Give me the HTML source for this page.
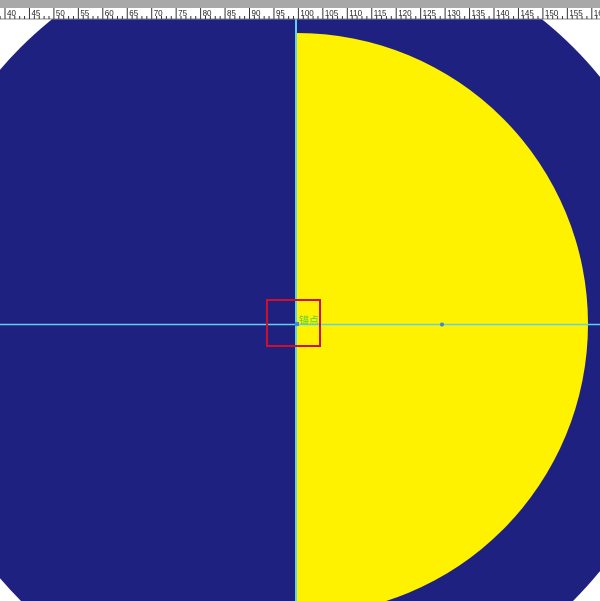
<!DOCTYPE html>
<html><head><meta charset="utf-8"><style>
html,body{margin:0;padding:0;width:600px;height:601px;overflow:hidden;background:#fff;font-family:"Liberation Sans","Noto Sans CJK SC",sans-serif}
</style></head><body>
<svg width="600" height="601" style="position:absolute;left:0;top:0">
<circle cx="297" cy="324" r="391" fill="#1e2180"/>
<path d="M297 33 A291 291 0 0 1 297 615 Z" fill="#fff200"/>
<line x1="296" y1="19" x2="296" y2="601" stroke="#5fd0f0" stroke-width="2"/>
<line x1="0" y1="324.5" x2="600" y2="324.5" stroke="#5fd0f0" stroke-width="1.5"/>
<rect x="267" y="300" width="53" height="46" fill="none" stroke="#d0102a" stroke-width="2"/>
<rect x="295" y="322" width="4" height="4" fill="#3a8ae0"/>
<circle cx="442" cy="324.5" r="2" fill="#3a8ae0"/>
<text x="299" y="324" font-size="10" fill="#4ad040">锚点</text>
<rect x="0" y="0" width="600" height="8" fill="#a8a8a8"/>
<rect x="0" y="8" width="600" height="11" fill="#fff"/>
<line x1="0" y1="19" x2="600" y2="19" stroke="#888" stroke-width="1"/>
<g id="ticks" stroke="#333" stroke-width="1"></g>
<g font-size="8" fill="#222" id="labels"></g>
</svg>
<script>
var t=document.getElementById('ticks'),l=document.getElementById('labels'),ns='http://www.w3.org/2000/svg';
for(var u=38;u<=162;u++){var x=5+(u-40)*4.89;var ln=document.createElementNS(ns,'line');var big=u%5==0;
ln.setAttribute('x1',x);ln.setAttribute('x2',x);ln.setAttribute('y1',big?8:16);ln.setAttribute('y2',19);t.appendChild(ln);
if(big){var tx=document.createElementNS(ns,'text');tx.setAttribute('x',x+2);tx.setAttribute('y',16);tx.textContent=u;l.appendChild(tx);}}
</script>
</body></html>
